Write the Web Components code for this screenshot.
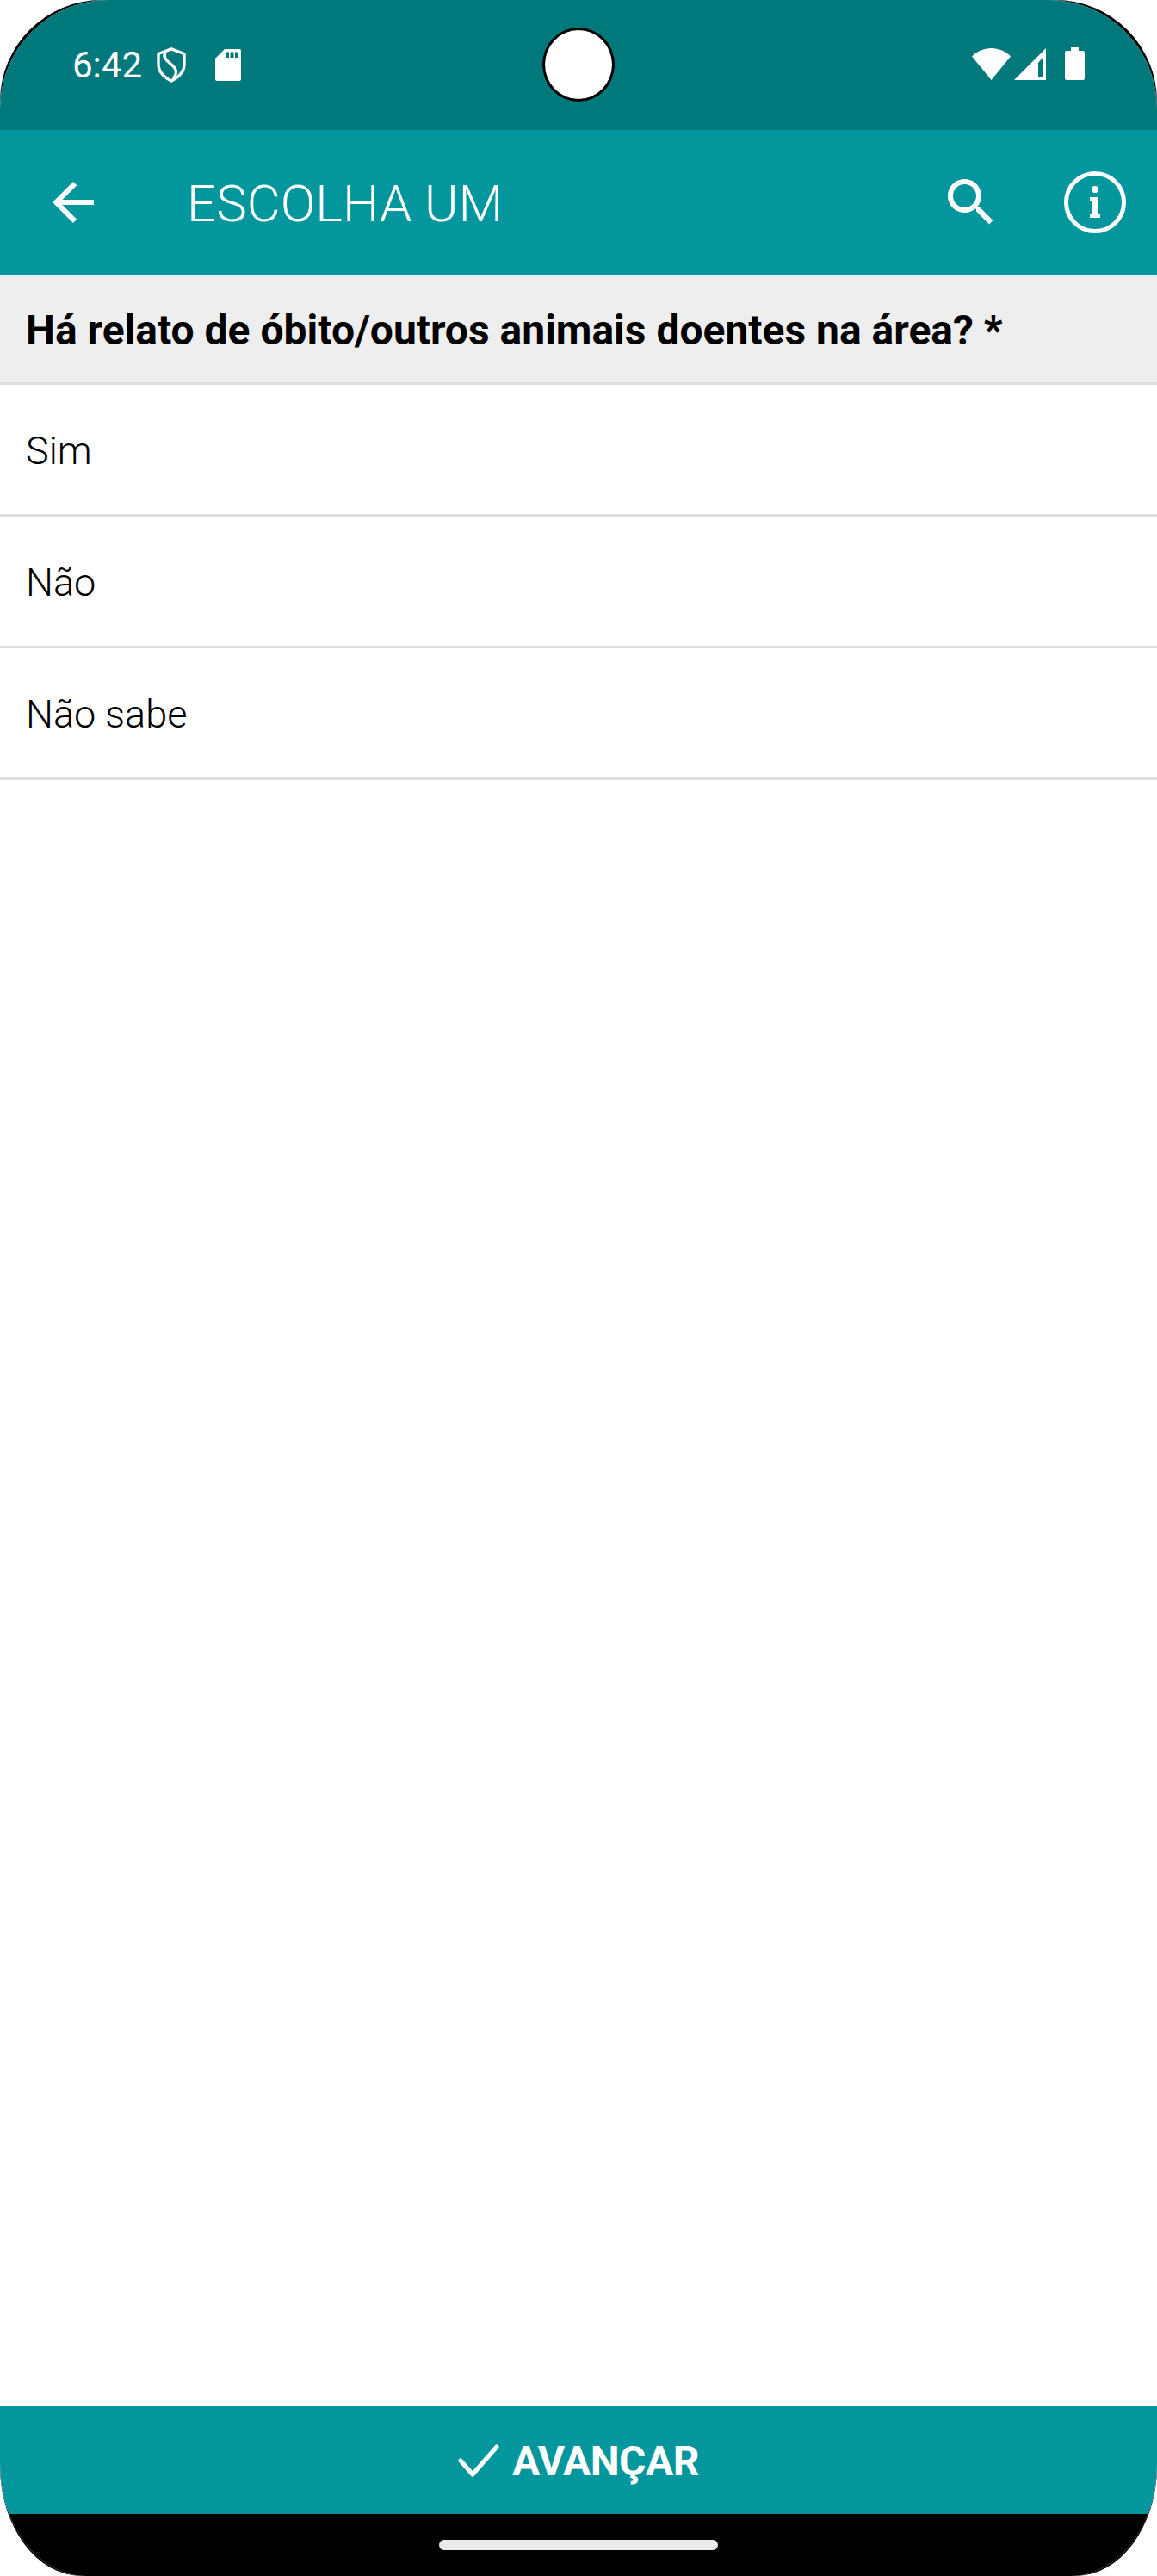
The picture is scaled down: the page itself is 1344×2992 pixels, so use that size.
<!DOCTYPE html>
<html>
<head>
<meta charset="utf-8">
<title>Escolha um</title>
<style>
  html, body { margin: 0; padding: 0; background: #fff; }
  body { width: 1344px; height: 2992px; overflow: hidden; font-family: Roboto, "Liberation Sans", sans-serif; }
</style>
</head>
<body>
<phone-frame>
  <status-bar time="6:42"></status-bar>
  <app-bar title="ESCOLHA UM"></app-bar>
  <question-header>Há relato de óbito/outros animais doentes na área? *</question-header>
  <option-row>Sim</option-row>
  <option-row>Não</option-row>
  <option-row>Não sabe</option-row>
  <next-bar>AVANÇAR</next-bar>
  <nav-bar></nav-bar>
</phone-frame>

<script>
// the outer black shape and the inner content have different radii, that gives the tapered edge in the corners
class PhoneFrame extends HTMLElement {
  constructor() {
    super();
    this.attachShadow({ mode: "open" });
    this.shadowRoot.innerHTML = `
      <style>
        :host { display: block; width: 1344px; height: 2992px; background: #000; border-radius: 118px 118px 95px 95px / 118px 118px 128px 128px; overflow: hidden; }
        .screen { display: flex; flex-direction: column; height: 100%; background: #fff; border-radius: 126px 126px 100px 100px / 126px 126px 130px 130px; overflow: hidden; }
        ::slotted(next-bar) { margin-top: auto; }
      </style>
      <div class="screen"><slot></slot></div>
    `;
  }
}

class StatusBar extends HTMLElement {
  constructor() {
    super();
    this.attachShadow({ mode: "open" });
    this.shadowRoot.innerHTML = `
      <style>
        :host { display: flex; align-items: flex-start; flex: none; position: relative; height: 151px; background: #00787c; color: #fff; box-sizing: border-box; padding: 55px 84px 0 84px; }
        .time { font: 400 42px/40px Roboto, sans-serif; margin: 1px 17px 0 0; }
        svg { display: block; flex: none; }
        .sd { margin-left: 34px; margin-top: 2px; }
        .right { display: flex; margin-left: auto; align-items: flex-start; }
        .signal { margin-left: 4px; margin-top: 1px; }
        .wifi { margin-top: 1px; }
        .battery { margin-left: 22px; }
        .camera { position: absolute; left: 630px; top: 32px; width: 84px; height: 86px; box-sizing: border-box; border: 3px solid #000; border-radius: 50%; background: #fff; }
      </style>
      <span class="time"></span>
      <svg class="shield" width="34" height="41" viewBox="0 0 34 41" fill="none" stroke="#fff" stroke-width="3.4" stroke-linejoin="round">
        <path d="M17 1.800 32 7.500v12c0 9-6 15-15 19.500C8 34.500 2 28.500 2 19.500v-12z"/>
        <path d="M10 6c-3 5 1 9 6 13 5 4 10 9 3 18"/>
      </svg>
      <svg class="sd" width="30" height="37" viewBox="0 0 30 37">
        <path fill="#fff" d="M11 0h17a2 2 0 0 1 2 2v33a2 2 0 0 1-2 2H2a2 2 0 0 1-2-2V11z"/>
        <path fill="#00787c" d="M12 3.500h4v6.500h-4zM17.500 3.500h4v6.500h-4zM23 3.500h4v6.500h-4z"/>
      </svg>
      <div class="right">
        <svg class="wifi" width="45" height="37" viewBox="0 0 45 37">
          <path fill="#fff" d="M22.500 37 0 9.500C6 3.500 14 0 22.500 0S39 3.500 45 9.500z"/>
        </svg>
        <svg class="signal" width="37" height="37" viewBox="0 0 37 37">
          <path fill="#fff" fill-rule="evenodd" d="M37 0v37H0zM33 11l-5 6v16h5z"/>
        </svg>
        <svg class="battery" width="23" height="38" viewBox="0 0 23 38">
          <path fill="#fff" d="M7 0h9v4h5a2 2 0 0 1 2 2v30a2 2 0 0 1-2 2H2a2 2 0 0 1-2-2V6a2 2 0 0 1 2-2h5z"/>
        </svg>
      </div>
      <div class="camera"></div>
    `;
    this.shadowRoot.querySelector(".time").textContent = this.getAttribute("time");
  }
}

class AppBar extends HTMLElement {
  constructor() {
    super();
    this.attachShadow({ mode: "open" });
    this.shadowRoot.innerHTML = `
      <style>
        :host { display: flex; align-items: center; flex: none; height: 168px; background: #04969d; color: #fff; box-sizing: border-box; padding: 0 36px 0 49px; }
        svg { display: block; flex: none; }
        .title { font: 300 60px/72px Roboto, sans-serif; margin-left: 96px; padding-top: 4px; flex: 1; }
        .info { margin-left: 72px; }
      </style>
      <svg width="72" height="72" viewBox="0 0 24 24" fill="#fff">
        <path d="M20 11H7.830l5.590-5.590L12 4l-8 8 8 8 1.410-1.410L7.830 13H20v-2z"/>
      </svg>
      <span class="title"></span>
      <svg width="72" height="72" viewBox="0 0 24 24" fill="#fff">
        <path d="M15.500 14h-.79l-.28-.27C15.410 12.590 16 11.110 16 9.500 16 5.910 13.090 3 9.500 3S3 5.910 3 9.500 5.910 16 9.500 16c1.610 0 3.090-.59 4.230-1.570l.27.28v.79l5 4.990L20.490 19l-4.990-5zm-6 0C7.010 14 5 11.990 5 9.500S7.010 5 9.500 5 14 7.010 14 9.500 11.990 14 9.500 14z"/>
      </svg>
      <svg class="info" width="72" height="72" viewBox="0 0 72 72">
        <circle cx="36" cy="36" r="33.500" fill="none" stroke="#fff" stroke-width="5"/>
        <circle cx="36" cy="21" r="4" fill="#fff"/>
        <path fill="#fff" d="M30 30h9v19h3v5H30v-5h3V35h-3z"/>
      </svg>
    `;
    this.shadowRoot.querySelector(".title").textContent = this.getAttribute("title");
  }
}

class QuestionHeader extends HTMLElement {
  constructor() {
    super();
    this.attachShadow({ mode: "open" });
    this.shadowRoot.innerHTML = `
      <style>
        :host { display: flex; align-items: center; flex: none; height: 128px; box-sizing: border-box; padding: 5px 30px 0; background: #eee; border-bottom: 3px solid #ddd; color: #000; font: 700 48px/56px Roboto, sans-serif; white-space: nowrap; }
      </style>
      <slot></slot>
    `;
  }
}

class OptionRow extends HTMLElement {
  constructor() {
    super();
    this.attachShadow({ mode: "open" });
    this.shadowRoot.innerHTML = `
      <style>
        :host { display: flex; align-items: center; flex: none; height: 153px; box-sizing: border-box; padding: 3px 30px 0; background: #fff; border-bottom: 3px solid #ddd; color: #000; font: 300 45px/56px Roboto, sans-serif; }
      </style>
      <slot></slot>
    `;
  }
}

class NextBar extends HTMLElement {
  constructor() {
    super();
    this.attachShadow({ mode: "open" });
    this.shadowRoot.innerHTML = `
      <style>
        :host { display: flex; align-items: center; justify-content: center; flex: none; height: 125px; background: #04969d; color: #fff; font: 700 48px/56px Roboto, sans-serif; letter-spacing: -0.5px; gap: 15px; }
        svg { display: block; flex: none; }
        .label { padding-top: 3px; }
      </style>
      <svg width="48" height="38" viewBox="0 0 48 38" fill="none" stroke="#fff" stroke-width="5" stroke-linecap="round" stroke-linejoin="round">
        <path d="M3 19 17 35 45 3"/>
      </svg>
      <span class="label"><slot></slot></span>
    `;
  }
}

class NavBar extends HTMLElement {
  constructor() {
    super();
    this.attachShadow({ mode: "open" });
    this.shadowRoot.innerHTML = `
      <style>
        :host { display: flex; justify-content: center; flex: none; height: 72px; background: #000; box-sizing: border-box; padding-top: 30px; }
        .pill { width: 324px; height: 12px; border-radius: 6px; background: #eaeaea; }
      </style>
      <div class="pill"></div>
    `;
  }
}

customElements.define("phone-frame", PhoneFrame);
customElements.define("status-bar", StatusBar);
customElements.define("app-bar", AppBar);
customElements.define("question-header", QuestionHeader);
customElements.define("option-row", OptionRow);
customElements.define("next-bar", NextBar);
customElements.define("nav-bar", NavBar);
</script>
</body>
</html>
